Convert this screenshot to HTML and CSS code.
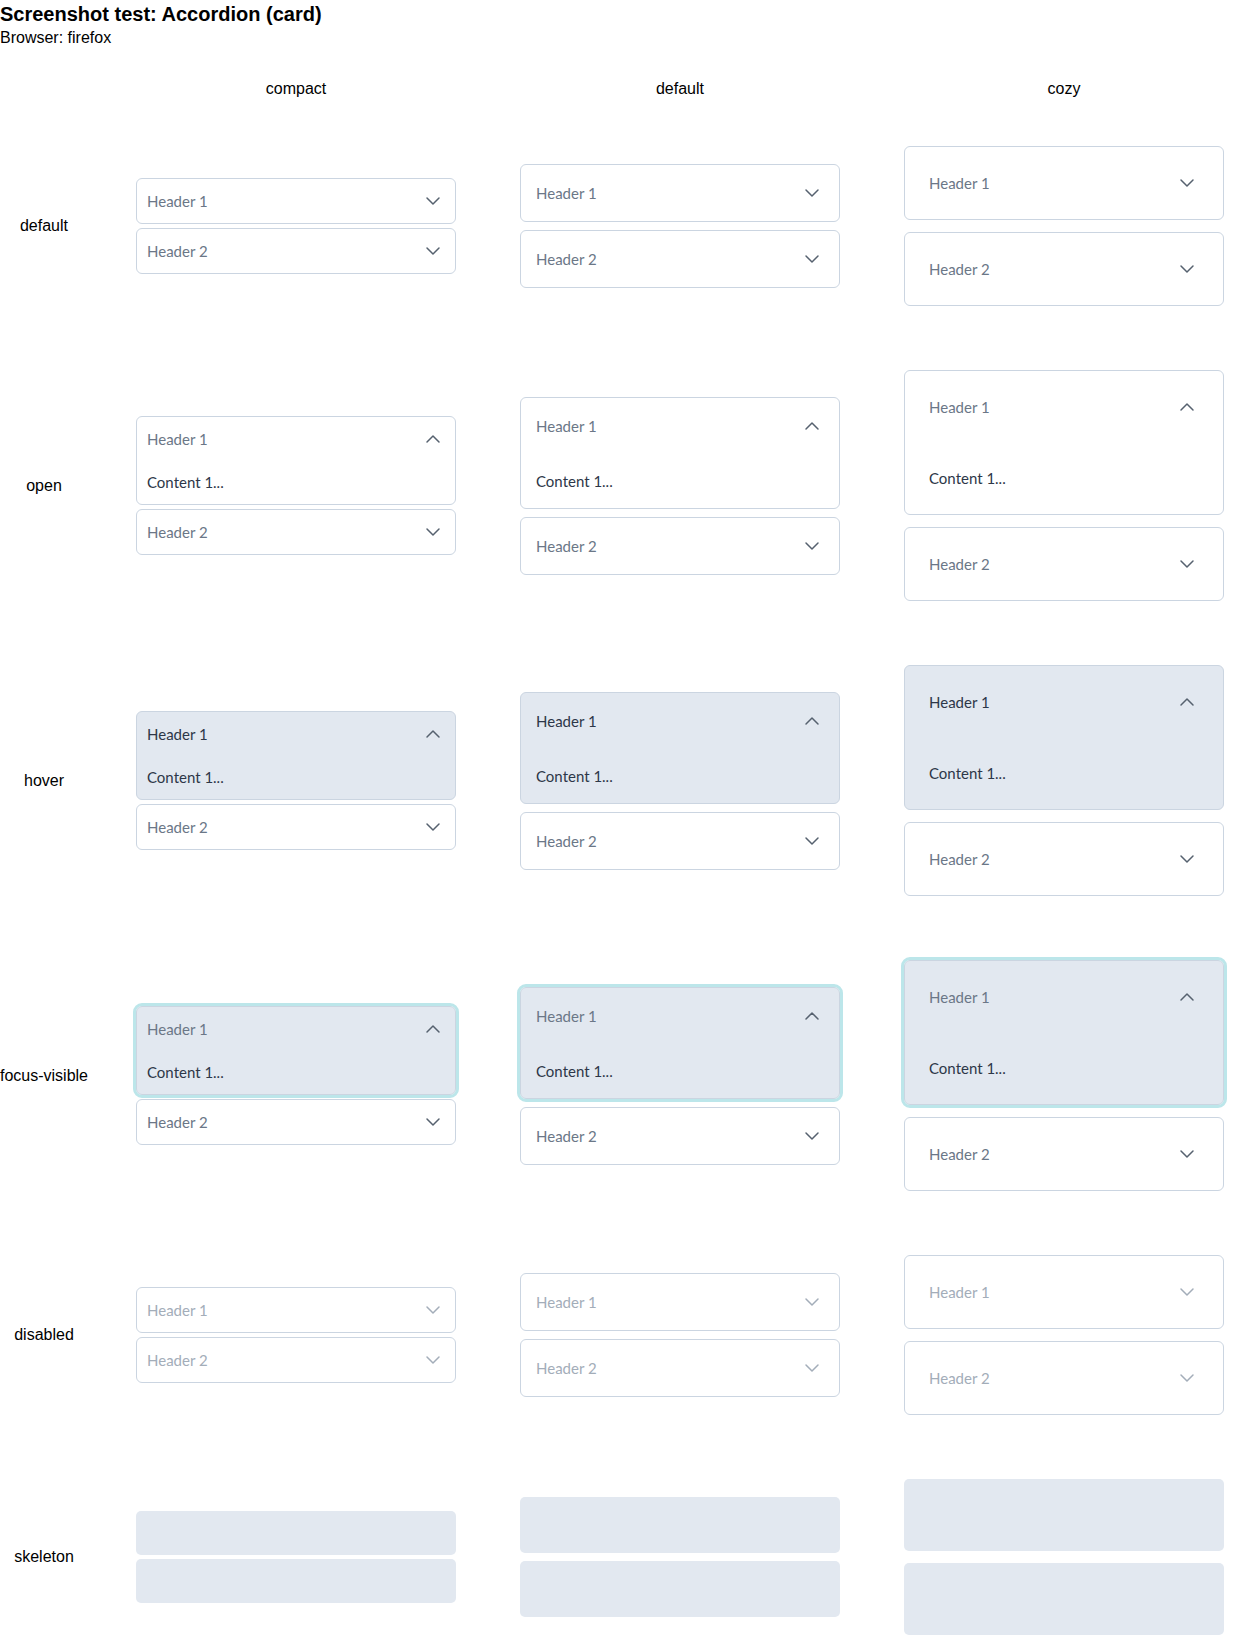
FILE: index.html
```html
<!DOCTYPE html>
<html>
<head>
<meta charset="utf-8">
<title>Accordion (card)</title>
<link rel="stylesheet" href="styles.css">
</head>
<body>
<div class="title">Screenshot test: Accordion (card)</div>
<div class="browser">Browser: firefox</div>

<svg width="0" height="0" class="defs">
  <defs>
    <symbol id="down" viewBox="0 0 24 24"><path d="m6 9 6 6 6-6" fill="none" stroke="currentColor" stroke-width="1.5" stroke-linecap="round" stroke-linejoin="round"/></symbol>
    <symbol id="up" viewBox="0 0 24 24"><path d="m18 15-6-6-6 6" fill="none" stroke="currentColor" stroke-width="1.5" stroke-linecap="round" stroke-linejoin="round"/></symbol>
  </defs>
</svg>

<div class="grid">
  <div class="colhead"></div>
  <div class="colhead"><span>compact</span></div>
  <div class="colhead"><span>default</span></div>
  <div class="colhead"><span>cozy</span></div>

  <!-- default -->
  <div class="label">default</div>
  <div class="cell"><div class="acc compact">
    <div class="item"><div class="head"><span>Header 1</span><svg class="ico"><use href="#down"/></svg></div></div>
    <div class="item"><div class="head"><span>Header 2</span><svg class="ico"><use href="#down"/></svg></div></div>
  </div></div>
  <div class="cell"><div class="acc normal">
    <div class="item"><div class="head"><span>Header 1</span><svg class="ico"><use href="#down"/></svg></div></div>
    <div class="item"><div class="head"><span>Header 2</span><svg class="ico"><use href="#down"/></svg></div></div>
  </div></div>
  <div class="cell"><div class="acc cozy">
    <div class="item"><div class="head"><span>Header 1</span><svg class="ico"><use href="#down"/></svg></div></div>
    <div class="item"><div class="head"><span>Header 2</span><svg class="ico"><use href="#down"/></svg></div></div>
  </div></div>

  <!-- open -->
  <div class="label">open</div>
  <div class="cell"><div class="acc compact">
    <div class="item"><div class="head"><span>Header 1</span><svg class="ico"><use href="#up"/></svg></div><div class="content">Content 1...</div></div>
    <div class="item"><div class="head"><span>Header 2</span><svg class="ico"><use href="#down"/></svg></div></div>
  </div></div>
  <div class="cell"><div class="acc normal">
    <div class="item"><div class="head"><span>Header 1</span><svg class="ico"><use href="#up"/></svg></div><div class="content">Content 1...</div></div>
    <div class="item"><div class="head"><span>Header 2</span><svg class="ico"><use href="#down"/></svg></div></div>
  </div></div>
  <div class="cell"><div class="acc cozy">
    <div class="item"><div class="head"><span>Header 1</span><svg class="ico"><use href="#up"/></svg></div><div class="content">Content 1...</div></div>
    <div class="item"><div class="head"><span>Header 2</span><svg class="ico"><use href="#down"/></svg></div></div>
  </div></div>

  <!-- hover -->
  <div class="label">hover</div>
  <div class="cell"><div class="acc compact">
    <div class="item hover"><div class="head"><span>Header 1</span><svg class="ico"><use href="#up"/></svg></div><div class="content">Content 1...</div></div>
    <div class="item"><div class="head"><span>Header 2</span><svg class="ico"><use href="#down"/></svg></div></div>
  </div></div>
  <div class="cell"><div class="acc normal">
    <div class="item hover"><div class="head"><span>Header 1</span><svg class="ico"><use href="#up"/></svg></div><div class="content">Content 1...</div></div>
    <div class="item"><div class="head"><span>Header 2</span><svg class="ico"><use href="#down"/></svg></div></div>
  </div></div>
  <div class="cell"><div class="acc cozy">
    <div class="item hover"><div class="head"><span>Header 1</span><svg class="ico"><use href="#up"/></svg></div><div class="content">Content 1...</div></div>
    <div class="item"><div class="head"><span>Header 2</span><svg class="ico"><use href="#down"/></svg></div></div>
  </div></div>

  <!-- focus-visible -->
  <div class="label">focus-visible</div>
  <div class="cell"><div class="acc compact">
    <div class="item focus"><div class="head"><span>Header 1</span><svg class="ico"><use href="#up"/></svg></div><div class="content">Content 1...</div></div>
    <div class="item"><div class="head"><span>Header 2</span><svg class="ico"><use href="#down"/></svg></div></div>
  </div></div>
  <div class="cell"><div class="acc normal">
    <div class="item focus"><div class="head"><span>Header 1</span><svg class="ico"><use href="#up"/></svg></div><div class="content">Content 1...</div></div>
    <div class="item"><div class="head"><span>Header 2</span><svg class="ico"><use href="#down"/></svg></div></div>
  </div></div>
  <div class="cell"><div class="acc cozy">
    <div class="item focus"><div class="head"><span>Header 1</span><svg class="ico"><use href="#up"/></svg></div><div class="content">Content 1...</div></div>
    <div class="item"><div class="head"><span>Header 2</span><svg class="ico"><use href="#down"/></svg></div></div>
  </div></div>

  <!-- disabled -->
  <div class="label">disabled</div>
  <div class="cell"><div class="acc compact disabled">
    <div class="item"><div class="head"><span>Header 1</span><svg class="ico"><use href="#down"/></svg></div></div>
    <div class="item"><div class="head"><span>Header 2</span><svg class="ico"><use href="#down"/></svg></div></div>
  </div></div>
  <div class="cell"><div class="acc normal disabled">
    <div class="item"><div class="head"><span>Header 1</span><svg class="ico"><use href="#down"/></svg></div></div>
    <div class="item"><div class="head"><span>Header 2</span><svg class="ico"><use href="#down"/></svg></div></div>
  </div></div>
  <div class="cell"><div class="acc cozy disabled">
    <div class="item"><div class="head"><span>Header 1</span><svg class="ico"><use href="#down"/></svg></div></div>
    <div class="item"><div class="head"><span>Header 2</span><svg class="ico"><use href="#down"/></svg></div></div>
  </div></div>

  <!-- skeleton -->
  <div class="label">skeleton</div>
  <div class="cell"><div class="acc compact">
    <div class="skel"></div>
    <div class="skel"></div>
  </div></div>
  <div class="cell"><div class="acc normal">
    <div class="skel"></div>
    <div class="skel"></div>
  </div></div>
  <div class="cell"><div class="acc cozy">
    <div class="skel"></div>
    <div class="skel"></div>
  </div></div>
</div>
</body>
</html>
```

FILE: styles.css
```css
html, body {
  margin: 0;
  padding: 0;
  background: #ffffff;
  color: #000000;
  font-family: "Liberation Sans", Arial, sans-serif;
}

.defs {
  position: absolute;
  width: 0;
  height: 0;
}

.title {
  font-size: 20px;
  font-weight: bold;
  line-height: 29px;
}

.browser {
  font-size: 16px;
}

.grid {
  display: grid;
  grid-template-columns: 88px 368px 384px 384px;
  margin-top: 17px;
}

.colhead {
  display: flex;
  justify-content: flex-end;
  padding: 16px 0 16px;
  font-size: 16px;
}

.colhead span {
  width: 320px;
  text-align: center;
}

.label {
  display: flex;
  align-items: center;
  justify-content: center;
  font-size: 16px;
  white-space: nowrap;
}

.cell {
  display: flex;
  align-items: center;
  justify-content: flex-end;
  padding: 32px 0;
}

.acc {
  width: 320px;
  display: flex;
  flex-direction: column;
  font-family: "Lato", "Source Sans Pro", sans-serif;
  font-size: 15px;
  line-height: 24px;
}

.item {
  border: 1px solid #cbd5e1;
  border-radius: 6px;
  background: #ffffff;
}

.head {
  display: flex;
  align-items: center;
  justify-content: space-between;
  color: #6b7787;
}

.ico {
  width: 24px;
  height: 24px;
  color: #56616f;
  flex: none;
}

.content {
  color: #2d3748;
}

.compact { gap: 4px; }
.compact .head { padding: 10px 10px; }
.compact .content { padding: 9px 10px 10px; }
.compact .skel { height: 44px; }

.normal { gap: 8px; }
.normal .head { padding: 16px 15px; }
.normal .content { padding: 15px 15px 15px; }
.normal .skel { height: 56px; }

.cozy { gap: 12px; }
.cozy .head { padding: 24px 24px; }
.cozy .content { padding: 23px 24px 24px; }
.cozy .skel { height: 72px; }

.item.hover {
  background: #e2e8f0;
}

.item.hover .head {
  color: #2d3748;
}

.item.focus {
  background: #e2e8f0;
  outline: 3px solid #bce6ea;
}

.disabled .head {
  color: #a3adb9;
}

.disabled .ico {
  color: #a3adb9;
}

.skel {
  background: #e2e8f0;
  border-radius: 5px;
}
```
